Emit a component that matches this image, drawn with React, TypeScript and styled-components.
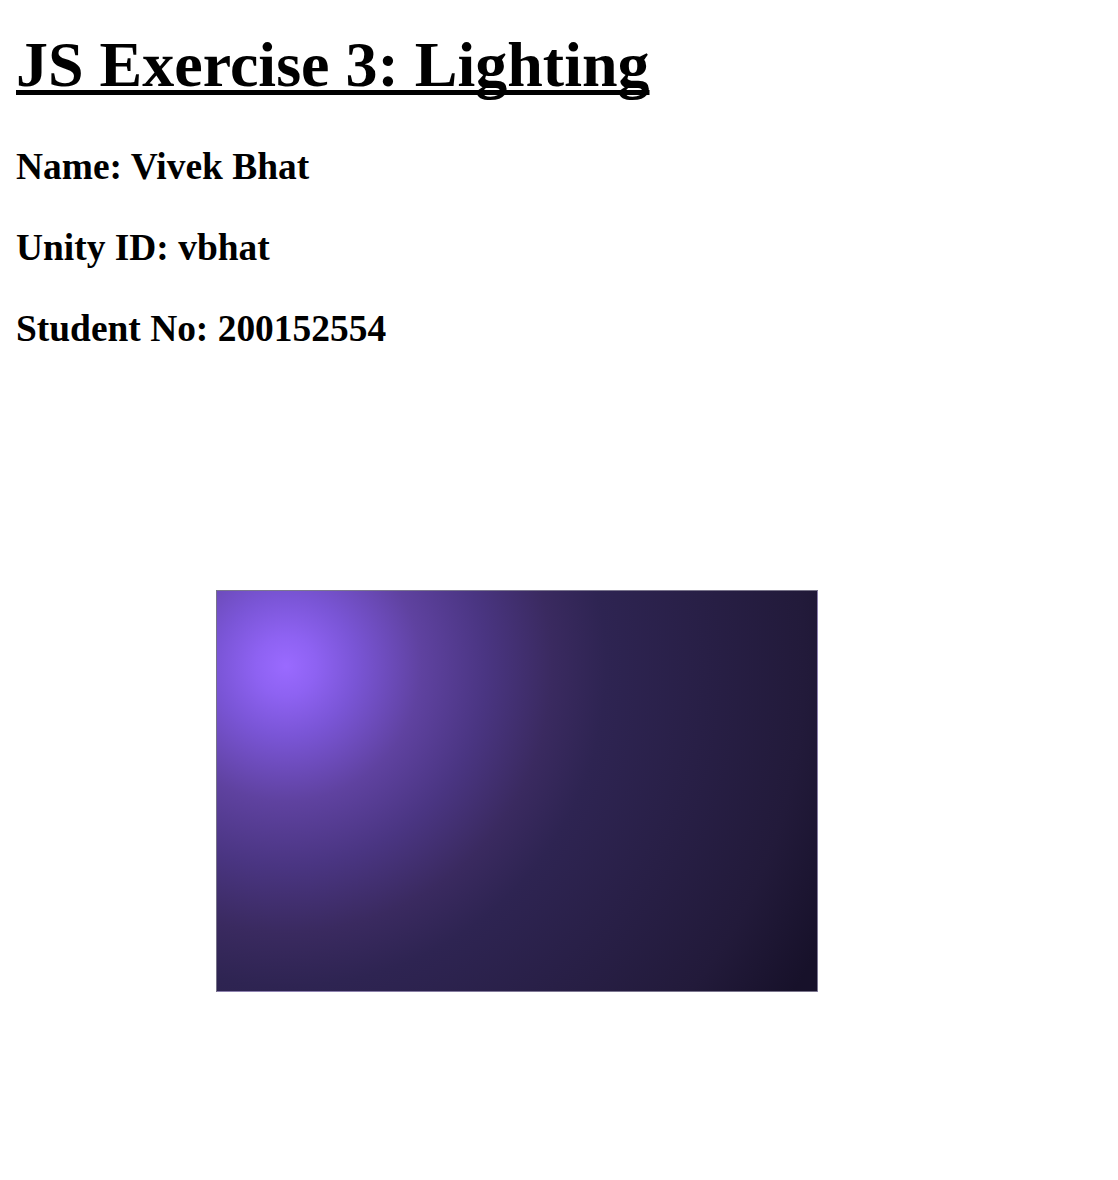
import React from "react";
import styled, { createGlobalStyle } from "styled-components";

const Global = createGlobalStyle`
  html, body { margin: 0; padding: 0; background: #ffffff; }
  body { font-family: "Liberation Serif", "Times New Roman", serif; color: #000; }
`;

const Page = styled.main`
  padding: 29px 16px 0 16px;
  display: flex;
  flex-direction: column;
  align-items: flex-start;
`;

const Title = styled.h1`
  margin: 0;
  font-size: 64px;
  line-height: 72px;
  font-weight: bold;
  text-decoration: underline;
  text-decoration-thickness: 5px;
  text-underline-offset: 4px;
  text-decoration-skip-ink: none;
`;

const Info = styled.h3`
  margin: ${(p: { $first?: boolean }) => (p.$first ? "44px" : "38px")} 0 0 0;
  font-size: 37.44px;
  line-height: 43px;
  font-weight: bold;
`;

const Viewport = styled.div`
  margin: 240px 0 0 200px;
  width: 600px;
  height: 400px;
  border: 1px solid rgba(150, 145, 165, 0.75);
  background: radial-gradient(
    circle at 69px 75px,
    #9a6aff 0px,
    #8e62f2 30px,
    #7a55d6 70px,
    #5f42a0 135px,
    #4a3582 200px,
    #3a2a60 266px,
    #2e2452 320px,
    #221a3a 519px,
    #17112a 603px
  );
`;

export default function App() {
  return (
    <>
      <Global />
      <Page>
        <Title>JS Exercise 3: Lighting</Title>
        <Info $first>Name: Vivek Bhat</Info>
        <Info>Unity ID: vbhat</Info>
        <Info>Student No: 200152554</Info>
        <Viewport />
      </Page>
    </>
  );
}
